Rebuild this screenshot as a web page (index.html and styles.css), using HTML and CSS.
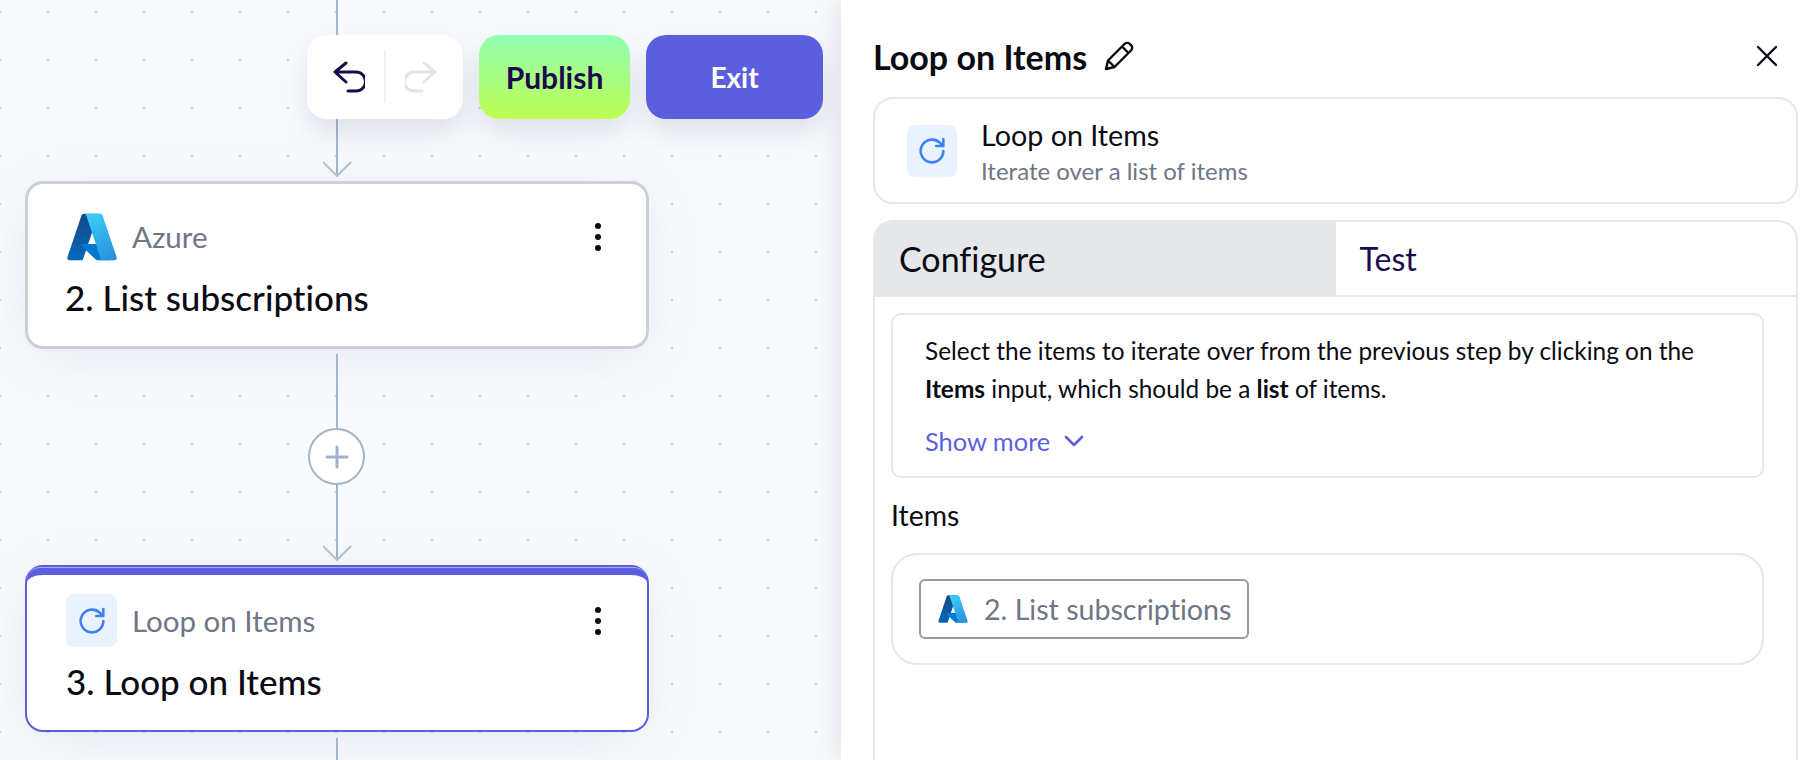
FILE: index.html
```html
<!DOCTYPE html>
<html lang="en">
<head>
<meta charset="utf-8">
<title>Loop on Items</title>
<link rel="stylesheet" href="styles.css">
</head>
<body>
<svg class="defs" width="0" height="0" aria-hidden="true">
  <defs>
    <linearGradient id="azA" x1="0.4" y1="0" x2="0.15" y2="1"><stop offset="0" stop-color="#114a8b"/><stop offset="1" stop-color="#0669bc"/></linearGradient>
    <linearGradient id="azC" x1="0.3" y1="0" x2="0.7" y2="1"><stop offset="0" stop-color="#3ccbf4"/><stop offset="1" stop-color="#2892df"/></linearGradient>
    <symbol id="azure" viewBox="0 0 96 96">
      <path fill="url(#azA)" d="M33.34 6.54h26.04L32.35 86.64a4.15 4.15 0 0 1-3.94 2.82H8.15a4.15 4.15 0 0 1-3.93-5.48L29.4 9.36a4.15 4.15 0 0 1 3.94-2.82z"/>
      <path fill="#0078d4" d="M71.17 60.26H29.88a1.91 1.91 0 0 0-1.3 3.31l26.53 24.76a4.17 4.17 0 0 0 2.85 1.13h23.38z"/>
      <path fill="url(#azC)" d="M66.6 9.36a4.15 4.15 0 0 0-3.93-2.82H33.65a4.15 4.15 0 0 1 3.93 2.82l25.18 74.62a4.15 4.15 0 0 1-3.93 5.48h29.02a4.15 4.15 0 0 0 3.93-5.48z"/>
    </symbol>
    <symbol id="loop" viewBox="0 0 24 24">
      <path fill="none" stroke="currentColor" stroke-width="1.800" stroke-linecap="round" stroke-linejoin="round" d="M20 12a8 8 0 1 1-2.600-5.900L20 8.500M20 3.500v5h-5"/>
    </symbol>
    <symbol id="kebab" viewBox="0 0 8 30">
      <circle cx="4" cy="4" r="3"/><circle cx="4" cy="15" r="3"/><circle cx="4" cy="26" r="3"/>
    </symbol>
  </defs>
</svg>
<div class="page">
  <main class="canvas">
    <div class="toolbar">
      <div class="history">
        <button class="hist-btn undo" type="button">
          <svg viewBox="0 0 32 32" width="32" height="32"><path d="M13 2 2 11l11 10M2 11h21a9.500 9.500 0 0 1 0 19h-8" fill="none" stroke="currentColor" stroke-width="3" stroke-linecap="round" stroke-linejoin="round"/></svg>
        </button>
        <span class="hist-sep"></span>
        <button class="hist-btn redo" type="button">
          <svg viewBox="0 0 32 32" width="32" height="32"><path d="m19 2 11 9-11 10M30 11H9a9.500 9.500 0 0 0 0 19h8" fill="none" stroke="currentColor" stroke-width="3" stroke-linecap="round" stroke-linejoin="round"/></svg>
        </button>
      </div>
      <button class="publish" type="button">Publish</button>
      <button class="exit" type="button">Exit</button>
    </div>

    <span class="line line-a"></span>
    <svg class="arrow arrow-a" viewBox="0 0 30 16" width="30" height="16"><path d="M1 1l14 14L29 1" fill="none" stroke="#b4c3d6" stroke-width="2"/></svg>
    <article class="node node-a">
      <div class="node-top">
        <svg class="node-logo" width="54" height="54"><use href="#azure"/></svg>
        <span class="node-app">Azure</span>
        <svg class="kebab" width="8" height="30"><use href="#kebab"/></svg>
      </div>
      <h2 class="node-title">2. List subscriptions</h2>
    </article>
    <span class="line line-b"></span>
    <div class="add"><svg viewBox="0 0 24 24" width="24" height="24"><path d="M12 2v20M2 12h20" stroke="#9fb2ca" stroke-width="3" stroke-linecap="round"/></svg></div>
    <span class="line line-c"></span>
    <svg class="arrow arrow-b" viewBox="0 0 30 16" width="30" height="16"><path d="M1 1l14 14L29 1" fill="none" stroke="#b4c3d6" stroke-width="2"/></svg>
    <article class="node node-b">
      <div class="node-top">
        <span class="tile tile-lg"><svg width="34" height="34"><use href="#loop"/></svg></span>
        <span class="node-app">Loop on Items</span>
        <svg class="kebab" width="8" height="30"><use href="#kebab"/></svg>
      </div>
      <h2 class="node-title">3. Loop on Items</h2>
    </article>
    <span class="line line-d"></span>
  </main>

  <aside class="panel">
    <header class="panel-head">
      <h1 class="panel-title">Loop on Items</h1>
      <svg class="pencil" viewBox="0 0 32 32" width="32" height="32"><path d="M3 29l2-8.500L21.500 4a3.800 3.800 0 0 1 5.400 0l1.100 1.100a3.800 3.800 0 0 1 0 5.400L11.500 27zM19 6.500l6.500 6.500M5 20.500l6.500 6.500" fill="none" stroke="#0b0b14" stroke-width="2.400" stroke-linejoin="round"/></svg>
      <svg class="close" viewBox="0 0 24 24" width="24" height="24"><path d="M3 3l18 18M21 3 3 21" stroke="#0b0b14" stroke-width="2.400" stroke-linecap="round"/></svg>
    </header>
    <section class="step-card">
      <span class="tile"><svg width="34" height="34"><use href="#loop"/></svg></span>
      <div class="step-text">
        <div class="step-name">Loop on Items</div>
        <div class="step-desc">Iterate over a list of items</div>
      </div>
    </section>
    <section class="tabs-card">
      <div class="tabs">
        <div class="tab tab-active">Configure</div>
        <div class="tab">Test</div>
      </div>
      <div class="tab-body">
        <div class="info">
          <p class="info-text">Select the items to iterate over from the previous step by clicking on the <b>Items</b> input, which should be a <b>list</b> of items.</p>
          <div class="more">Show more <svg viewBox="0 0 20 12" width="20" height="12"><path d="M2 2l8 8 8-8" fill="none" stroke="currentColor" stroke-width="2.600" stroke-linecap="round" stroke-linejoin="round"/></svg></div>
        </div>
        <div class="field-label">Items</div>
        <div class="field">
          <span class="chip"><svg width="32" height="32"><use href="#azure"/></svg>2. List subscriptions</span>
        </div>
      </div>
    </section>
  </aside>
</div>
</body>
</html>
```
FILE: styles.css
```css
* { box-sizing: border-box; }
html, body { margin: 0; height: 100%; overflow: hidden; }
body { font-family: "Lato", "Liberation Sans", sans-serif; font-variant-ligatures: none; color: #0b0b14; background: #fff; }
.defs { position: absolute; }
button { font: inherit; border: 0; cursor: pointer; }
h1, h2, p { margin: 0; }

.page { display: flex; width: 1807px; height: 760px; }

.canvas {
  position: relative;
  flex: 0 0 841px;
  background-color: #f9fafd;
  background-image: radial-gradient(circle, #c9cdd6 0.9px, transparent 1.1px);
  background-size: 48px 48px;
  background-position: 24px -12px;
  overflow: hidden;
}

.toolbar { position: absolute; left: 307px; top: 35px; display: flex; gap: 16px; z-index: 3; }
.history, .publish, .exit { height: 84px; border-radius: 20px; box-shadow: 0 14px 28px rgba(90, 100, 150, .16); }
.history { width: 156px; background: #fff; display: flex; align-items: center; padding: 0 7px; }
.hist-btn { flex: 1; background: none; padding: 0; display: flex; justify-content: center; align-items: center; }
.undo { color: #1c0a4e; }
.redo { color: #e1e4e8; }
.hist-sep { width: 2px; height: 52px; background: #eef0f3; }
.publish { width: 151px; background: linear-gradient(#92ffb2, #bdff52); color: #1c0a4e; font-size: 30px; font-weight: 700; }
.exit { width: 177px; background: #5c5fdd; color: #fff; font-size: 28px; font-weight: 700; }

.line { position: absolute; left: 336px; width: 2px; background: #a3b5cc; }
.line-a { top: 0; height: 175px; }
.line-b { top: 354px; height: 76px; }
.line-c { top: 484px; height: 75px; }
.line-d { top: 738px; height: 22px; }
.arrow { position: absolute; left: 322px; }
.arrow-a { top: 161px; }
.arrow-b { top: 545px; }
.add {
  position: absolute; left: 308px; top: 428px; width: 57px; height: 57px;
  border-radius: 50%; border: 2px solid #a3b5cc; background: #fff;
  display: flex; align-items: center; justify-content: center;
}

.node {
  position: absolute; left: 25px; width: 624px; background: #fff; border-radius: 18px;
  box-shadow: 0 10px 60px rgba(90, 100, 150, .11);
}
.node-a { top: 181px; height: 168px; border: 3px solid #c9d0da; padding: 26px 44px 0 37px; }
.node-b { top: 565px; height: 167px; border: 2px solid #5c5fdd; border-top-width: 10px; padding: 19px 45px 0 39px; }
.node-b::before {
  content: ""; position: absolute; top: -8px; left: 0; right: 0; height: 12px;
  border-top: 1px solid #a5a7f0; border-radius: 16px 16px 0 0;
}
.node-top { display: flex; align-items: center; height: 53px; }
.node-logo { flex: none; margin-right: -2px; }
.node-app { margin-left: 15px; font-size: 29.500px; color: #6f7686; flex: 1; }
.kebab { fill: #0b0b14; flex: none; }
.node-title { font-size: 35px; font-weight: 500; margin-top: 14px; line-height: 40px; color: #0b0b14; }

.tile { display: flex; align-items: center; justify-content: center; width: 50px; height: 52px; border-radius: 8px; background: #ebf2ff; color: #3b82f6; flex: none; }
.tile-lg { width: 51px; height: 53px; }

.panel {
  flex: 1; min-width: 0; background: #fff; position: relative; padding: 0 9px 0 32px;
  display: flex; flex-direction: column;
  box-shadow: -4px 0 24px rgba(80, 85, 120, .14);
}
.panel-head { display: flex; align-items: center; height: 97px; padding-top: 15px; flex: none; }
.panel-title { font-size: 34px; font-weight: 700; }
.pencil { margin-left: 16px; }
.close { margin-left: auto; margin-right: 19px; }

.step-card {
  display: flex; align-items: center; height: 107px; flex: none;
  border: 2px solid #e5e7eb; border-radius: 20px; padding: 0 32px;
  gap: 24px;
}
.step-text { padding-top: 6px; }
.step-name { font-size: 28.700px; line-height: 35px; }
.step-desc { font-size: 24px; color: #6f7686; line-height: 36px; }

.tabs-card {
  margin-top: 16px; flex: 1; min-height: 0;
  border: 2px solid #e5e7eb; border-bottom: 0; border-radius: 20px 20px 0 0;
  overflow: hidden;
}
.tabs { display: grid; grid-template-columns: 1fr 1fr; height: 75px; border-bottom: 2px solid #e5e7eb; }
.tab { display: flex; align-items: center; padding-left: 24px; font-size: 32px; color: #1c0a4e; }
.tab-active { background: #e5e7eb; color: #0b0b14; font-size: 34px; }
.tab-body { padding: 16px 32px 0 16px; }
.info { border: 2px solid #e5e7eb; border-radius: 10px; padding: 17px 32px 0 32px; height: 165px; }
.info-text { font-size: 24.400px; line-height: 38px; }
.info-text b { font-weight: 700; }
.more { margin-top: 18px; font-size: 25.400px; color: #5c5fdd; display: flex; align-items: center; gap: 14px; line-height: 30px; }
.field-label { margin-top: 18px; font-size: 28.400px; line-height: 38px; }
.field { margin-top: 19px; height: 112px; border: 2px solid #e5e7eb; border-radius: 26px; padding: 24px 26px; }
.chip { display: inline-flex; align-items: center; gap: 15px; height: 60px; padding: 0 16px; border: 2px solid #9a9a9a; border-radius: 6px; font-size: 28.600px; color: #6f7686; }
```
